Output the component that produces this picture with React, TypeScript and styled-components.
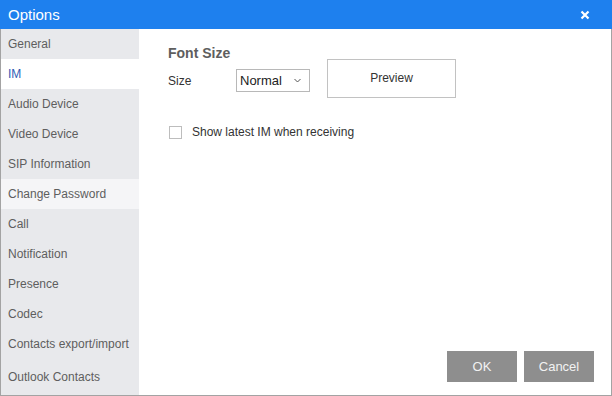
import React from 'react';
import styled, { createGlobalStyle } from 'styled-components';

const GlobalStyle = createGlobalStyle`
  html, body {
    margin: 0;
    padding: 0;
    background: #ffffff;
  }
  body {
    font-family: 'Liberation Sans', Arial, sans-serif;
  }
`;

const Dialog = styled.div`
  width: 612px;
  height: 396px;
  box-sizing: border-box;
  display: flex;
  flex-direction: column;
  border: 1px solid #a3a3a3;
  border-top: none;
  background: #ffffff;
`;

const TitleBar = styled.div`
  height: 29px;
  margin: 0 -1px;
  display: flex;
  align-items: center;
  justify-content: space-between;
  padding: 0 22px 0 8px;
  background: #1e80ee;
  color: #ffffff;
  font-size: 15px;
`;

const CloseButton = styled.button`
  border: none;
  background: transparent;
  padding: 0;
  width: 10px;
  height: 10px;
  display: flex;
  cursor: pointer;
`;

const Body = styled.div`
  flex: 1;
  display: flex;
  min-height: 0;
`;

const Sidebar = styled.nav`
  width: 138px;
  background: #e8e9ec;
  display: flex;
  flex-direction: column;
`;

const NavItem = styled.div<{ $active?: boolean; $hover?: boolean; $tall?: boolean }>`
  height: ${(p) => (p.$tall ? 36 : 30)}px;
  display: flex;
  align-items: center;
  padding-left: 7px;
  font-size: 12px;
  color: ${(p) => (p.$active ? '#2f5db5' : '#5e5e5e')};
  background: ${(p) => (p.$active ? '#ffffff' : p.$hover ? '#f5f5f7' : 'transparent')};
  white-space: nowrap;
  cursor: pointer;
`;

const Content = styled.main`
  flex: 1;
  display: flex;
  flex-direction: column;
  padding: 16px 17px 13px 29px;
`;

const TopRow = styled.div`
  display: flex;
  align-items: flex-start;
`;

const LeftCol = styled.div`
  width: 159px;
  display: flex;
  flex-direction: column;
`;

const Heading = styled.div`
  font-size: 14px;
  line-height: 16px;
  font-weight: bold;
  color: #5e5e5e;
  margin-bottom: 8px;
`;

const SizeRow = styled.div`
  display: flex;
  align-items: center;
  height: 23px;
`;

const Label = styled.span`
  width: 68px;
  font-size: 12px;
  color: #333333;
`;

const Select = styled.div`
  width: 74px;
  height: 23px;
  box-sizing: border-box;
  border: 1px solid #b8b8b8;
  display: flex;
  align-items: center;
  justify-content: space-between;
  padding: 0 8px 0 3px;
  font-size: 13px;
  color: #222222;
`;

const PreviewBox = styled.div`
  margin-top: 14px;
  width: 129px;
  height: 39px;
  box-sizing: border-box;
  border: 1px solid #c2c2c2;
  display: flex;
  align-items: center;
  justify-content: center;
  padding-bottom: 2px;
  font-size: 12px;
  color: #333333;
`;

const CheckRow = styled.label`
  margin-top: 27px;
  display: flex;
  align-items: center;
  gap: 10px;
  font-size: 12px;
  color: #333333;
`;

const Box = styled.span`
  width: 13px;
  height: 13px;
  box-sizing: border-box;
  border: 1px solid #bdbdbd;
  background: #ffffff;
  margin-left: 1px;
`;

const Footer = styled.div`
  margin-top: auto;
  display: flex;
  justify-content: flex-end;
  gap: 7px;
`;

const Button = styled.button`
  width: 70px;
  height: 31px;
  border: none;
  background: #8e8e8e;
  color: #f2f2f2;
  font-family: 'Liberation Sans', Arial, sans-serif;
  font-size: 13px;
  cursor: pointer;
`;

const items = [
  'General',
  'IM',
  'Audio Device',
  'Video Device',
  'SIP Information',
  'Change Password',
  'Call',
  'Notification',
  'Presence',
  'Codec',
  'Contacts export/import',
  'Outlook Contacts',
];

const App = () => {
  return (
    <>
      <GlobalStyle />
      <Dialog>
        <TitleBar>
          <span>Options</span>
          <CloseButton aria-label="Close">
            <svg width="10" height="10" viewBox="0 0 10 10">
              <path d="M1.5 1.5 L8.5 8.5 M8.5 1.5 L1.5 8.5" stroke="#ffffff" strokeWidth="2.2" />
            </svg>
          </CloseButton>
        </TitleBar>
        <Body>
          <Sidebar>
            {items.map((item, i) => (
              <NavItem
                key={item}
                $active={item === 'IM'}
                $hover={item === 'Change Password'}
                $tall={i === items.length - 1}
              >
                {item}
              </NavItem>
            ))}
          </Sidebar>
          <Content>
            <TopRow>
              <LeftCol>
                <Heading>Font Size</Heading>
                <SizeRow>
                  <Label>Size</Label>
                  <Select>
                    <span>Normal</span>
                    <svg width="7" height="5" viewBox="0 0 7 5">
                      <path d="M0.5 1 L3.5 4 L6.5 1" stroke="#555555" strokeWidth="1" fill="none" />
                    </svg>
                  </Select>
                </SizeRow>
              </LeftCol>
              <PreviewBox>Preview</PreviewBox>
            </TopRow>
            <CheckRow>
              <Box />
              <span>Show latest IM when receiving</span>
            </CheckRow>
            <Footer>
              <Button>OK</Button>
              <Button>Cancel</Button>
            </Footer>
          </Content>
        </Body>
      </Dialog>
    </>
  );
};

export default App;
